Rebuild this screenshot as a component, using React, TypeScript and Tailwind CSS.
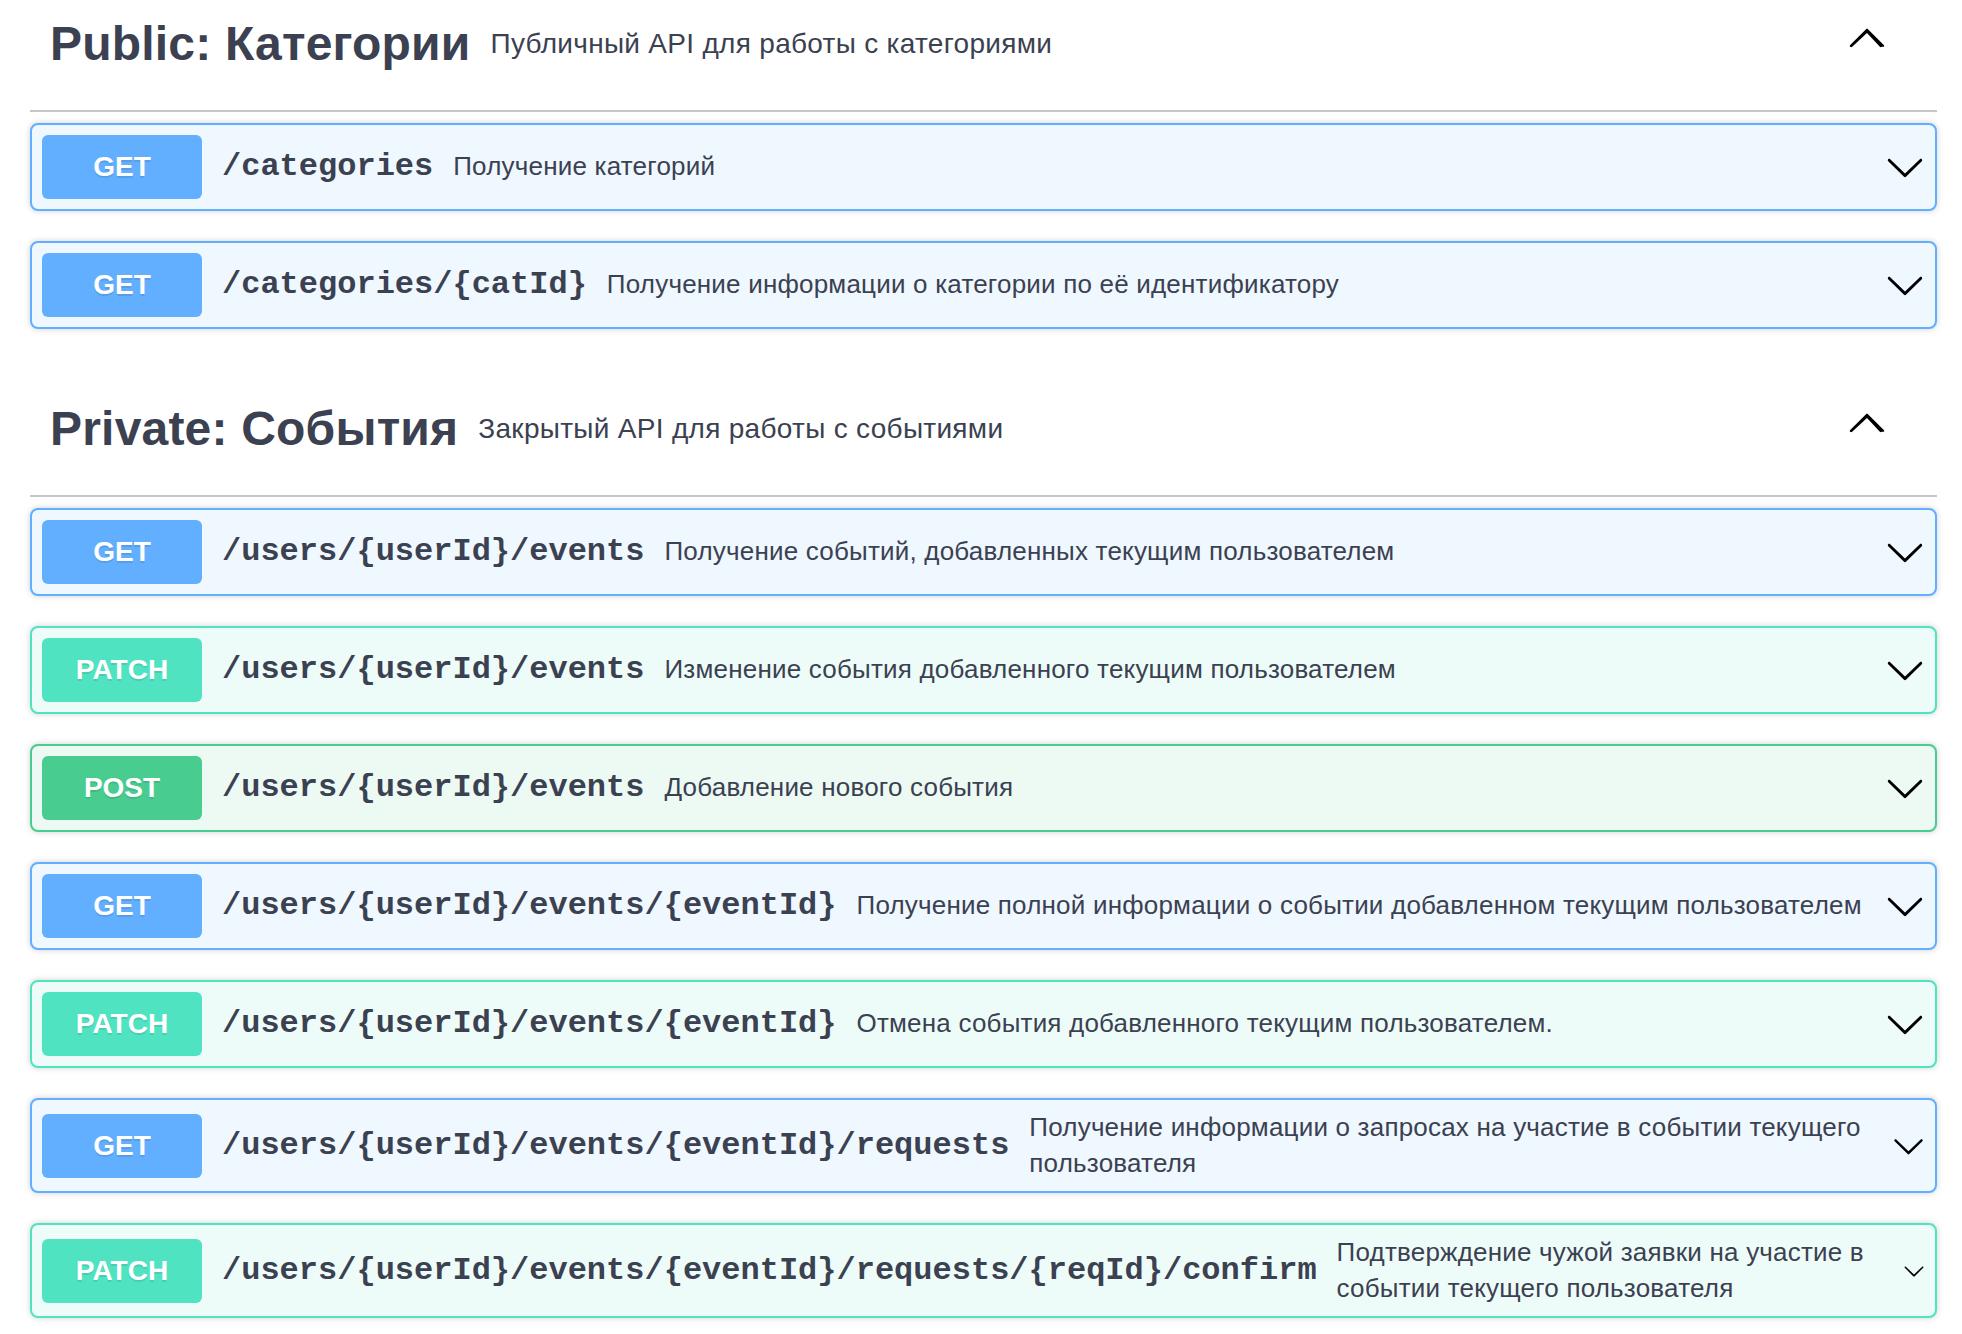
import React from "react";

type Method = "GET" | "PATCH" | "POST";

type Op = {
  method: Method;
  path: string;
  summary: string;
  arrowW?: number;
};

type Section = {
  title: string;
  desc: string;
  ops: Op[];
};

const methodStyle: Record<Method, { card: string; badge: string }> = {
  GET: { card: "border-[#61affe] bg-[#eff7ff]", badge: "bg-[#61affe]" },
  PATCH: { card: "border-[#50e3c2] bg-[#eefcf9]", badge: "bg-[#50e3c2]" },
  POST: { card: "border-[#49cc90] bg-[#edfaf4]", badge: "bg-[#49cc90]" },
};

const sections: Section[] = [
  {
    title: "Public: Категории",
    desc: "Публичный API для работы с категориями",
    ops: [
      { method: "GET", path: "/categories", summary: "Получение категорий" },
      {
        method: "GET",
        path: "/categories/{catId}",
        summary: "Получение информации о категории по её идентификатору",
      },
    ],
  },
  {
    title: "Private: События",
    desc: "Закрытый API для работы с событиями",
    ops: [
      {
        method: "GET",
        path: "/users/{userId}/events",
        summary: "Получение событий, добавленных текущим пользователем",
      },
      {
        method: "PATCH",
        path: "/users/{userId}/events",
        summary: "Изменение события добавленного текущим пользователем",
      },
      { method: "POST", path: "/users/{userId}/events", summary: "Добавление нового события" },
      {
        method: "GET",
        path: "/users/{userId}/events/{eventId}",
        summary: "Получение полной информации о событии добавленном текущим пользователем",
      },
      {
        method: "PATCH",
        path: "/users/{userId}/events/{eventId}",
        summary: "Отмена события добавленного текущим пользователем.",
      },
      {
        method: "GET",
        path: "/users/{userId}/events/{eventId}/requests",
        summary: "Получение информации о запросах на участие в событии текущего пользователя",
        arrowW: 33,
      },
      {
        method: "PATCH",
        path: "/users/{userId}/events/{eventId}/requests/{reqId}/confirm",
        summary: "Подтверждение чужой заявки на участие в событии текущего пользователя",
        arrowW: 22,
      },
    ],
  },
];

function ArrowUp() {
  return (
    <svg width={40} height={40} viewBox="0 0 20 20" fill="#000">
      <path d="M17.418 14.908c-.272.268-.709.268-.979 0L10 7.99l-7.418 6.918c-.27.268-.707.268-.979 0-.27-.268-.27-.701 0-.969l7.908-7.83c.27-.268.707-.268.979 0l7.908 7.83c.27.268.27.701 0 .969z" />
    </svg>
  );
}

function ArrowDown({ w = 40 }: { w?: number }) {
  return (
    <svg width={w} height={40} viewBox="0 0 20 20" fill="#000" className="shrink-0">
      <path d="M17.418 6.109c.272-.268.709-.268.979 0s.271.701 0 .969l-7.908 7.83c-.27.268-.707.268-.979 0l-7.908-7.83c-.27-.268-.27-.701 0-.969.271-.268.709-.268.979 0L10 13.25l7.418-7.141z" />
    </svg>
  );
}

function OpBlock({ op }: { op: Op }) {
  const s = methodStyle[op.method];
  return (
    <div
      className={`flex items-center p-[10px] mb-[30px] border-2 rounded-[8px] shadow-[0_0_6px_rgba(0,0,0,0.19)] ${s.card}`}
    >
      <div
        className={`w-[160px] h-[64px] shrink-0 rounded-[6px] flex items-center justify-center text-white text-[28px] font-bold [text-shadow:0_2px_0_rgba(0,0,0,0.1)] ${s.badge}`}
      >
        {op.method}
      </div>
      <span className="px-[20px] shrink-0 whitespace-nowrap font-['Liberation_Mono',monospace] font-bold text-[32px] text-[#3b4151]">
        {op.path}
      </span>
      <div className="flex-1 text-[26px] leading-[35.5px] tracking-[0.2px] text-[#3b4151]">{op.summary}</div>
      <ArrowDown w={op.arrowW} />
    </div>
  );
}

export default function App() {
  return (
    <div className="min-h-[1334px] bg-white pl-[30px] pr-[25px] font-['Liberation_Sans',Arial,sans-serif] text-[#3b4151]">
      {sections.map((sec) => (
        <div key={sec.title} className="pb-[26px]">
          <div className="flex items-center h-[112px] pl-[20px] pr-[50px] pb-[23px] border-b-2 border-[#c4c6cb]">
            <span className="text-[48px] font-bold tracking-[0.2px] whitespace-nowrap">{sec.title}</span>
            <span className="flex-1 px-[20px] text-[28px] tracking-[0.3px]">{sec.desc}</span>
            <button className="pb-[13px]">
              <ArrowUp />
            </button>
          </div>
          <div className="pt-[11px]">
            {sec.ops.map((op, i) => (
              <OpBlock key={i} op={op} />
            ))}
          </div>
        </div>
      ))}
    </div>
  );
}
